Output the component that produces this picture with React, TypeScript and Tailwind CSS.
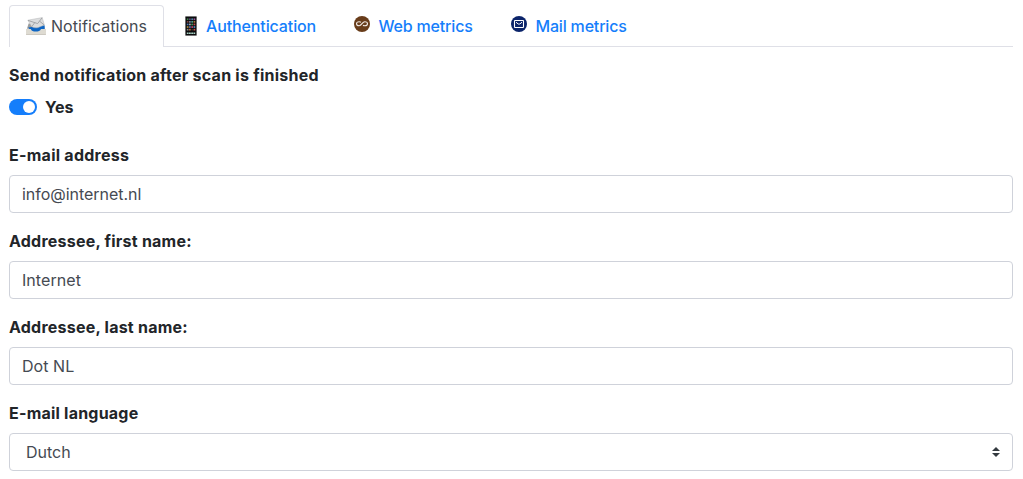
import type { ReactNode } from "react";

function InboxIcon() {
  return (
    <svg width="20" height="18" viewBox="0 0 20 18" className="block">
      <path d="M2.6 6.5 1 11.8h18l-1.6-5z" fill="#9c9d9d" />
      <path d="M2.2 10.6 18.6 8.2v4.2l-4 3H6z" fill="#0f66c4" />
      <path d="M1.8 3.2 16.2.6l2.2 7.4-6.4 2.6c-2 .4-4.4.2-6.2-.8z" fill="#dcddde" stroke="#b5b7b9" strokeWidth=".5" />
      <path d="m2 3.4 9.6 3.2L16.1.8M5.8 9.6l3-4M18 7.8l-4.4-3.6" fill="none" stroke="#97999c" strokeWidth=".8" />
      <path d="M0 12h4.8c.6 2 2.4 2.6 5 2.6s4.5-.5 5.2-2.6h5v6H0z" fill="#dedbd2" />
      <path d="M.2 17.6h19.6" stroke="#c5c2ba" strokeWidth=".8" />
    </svg>
  );
}

const appColors = [
  "#3f7d4c", "#5a4a78", "#4b86a6", "#9b5a9e",
  "#7e4040", "#73809c", "#4a9a8e", "#a07a3a",
  "#4a78b8", "#b0b0b0", "#3d8f5a", "#c05050",
  "#b08a3c", "#5f6fae", "#c04870", "#4e8fc0",
  "#8a8a8a", "#c86a3a", "#303030", "#d05050",
];

function PhoneIcon() {
  return (
    <svg width="12" height="20" viewBox="0 0 12 20" className="block">
      <rect x=".4" y=".4" width="11.2" height="19.2" rx=".8" fill="#0b0b0c" stroke="#6f6f70" strokeWidth=".8" />
      {appColors.map((c, i) => (
        <rect key={i} x={1.8 + (i % 4) * 2.25} y={2.4 + Math.floor(i / 4) * 2.6} width="1.7" height="1.7" fill={c} />
      ))}
      <path d="M1.8 17.2h8.4" stroke="#a9d2c4" strokeWidth="1.5" strokeDasharray="1.8 .4" />
    </svg>
  );
}

function WebIcon() {
  return (
    <svg width="16" height="16" viewBox="0 0 16 16" className="block">
      <circle cx="8" cy="8" r="8" fill="#683c1a" />
      <path
        d="M7 6.2C6.6 5.9 6 5.7 5.2 5.7 3.6 5.7 2.5 6.5 2.5 7.7s1.1 2 2.7 2C7.8 9.7 8.2 5.7 10.8 5.7c1.6 0 2.7.8 2.7 2s-1.1 2-2.7 2c-.8 0-1.4-.2-1.8-.5"
        fill="none"
        stroke="#f0e9e4"
        strokeWidth="1.1"
      />
    </svg>
  );
}

function MailIcon() {
  return (
    <svg width="16" height="16" viewBox="0 0 16 16" className="block">
      <circle cx="8" cy="8" r="8" fill="#0b246a" />
      <rect x="3.5" y="4.5" width="9" height="7" rx=".6" fill="none" stroke="#fff" strokeWidth="1.1" />
      <path d="M5 6.2 7.2 8h1.6L11 6.2" fill="none" stroke="#fff" strokeWidth="1" />
    </svg>
  );
}

function Field({ label, labelClass, children }: { label: string; labelClass: string; children: ReactNode }) {
  return (
    <div className="mb-4">
      <label className="mb-2 block font-bold">
        <span className={labelClass}>{label}</span>
      </label>
      {children}
    </div>
  );
}

const box = "flex h-[38px] w-full items-center rounded border border-[#cfd2da] bg-white font-normal text-[#454a52]";

export default function App() {
  return (
    <main className="h-[479px] overflow-hidden bg-white pt-[5px] pr-2.5 pl-[9px] font-['Inter',sans-serif] text-base leading-6 text-[#222529]">
      <nav className="flex h-[42px] border-b border-[#dfe0e7] font-medium text-[#157efb]">
        <a className="flex h-[42px] w-[155px] items-center rounded-t border border-b-0 border-[#dfe0e7] bg-white pb-0.5 pl-4 font-normal text-[#454a52]">
          <InboxIcon />
          <span className="ml-[5px] whitespace-nowrap tracking-[0.05px]">Notifications</span>
        </a>
        <a className="flex w-[170px] items-center pl-[21px]">
          <PhoneIcon />
          <span className="ml-[9px] whitespace-nowrap tracking-[-0.12px]">Authentication</span>
        </a>
        <a className="flex w-[157px] items-center pl-5">
          <span className="-mt-1"><WebIcon /></span>
          <span className="ml-[8.5px] whitespace-nowrap tracking-[-0.18px]">Web metrics</span>
        </a>
        <a className="flex items-center pl-5">
          <span className="-mt-1"><MailIcon /></span>
          <span className="ml-[8.5px] whitespace-nowrap tracking-[-0.18px]">Mail metrics</span>
        </a>
      </nav>
      <section className="pt-4">
        <div className="font-bold"><span className="tracking-[0.24px]">Send notification after scan is finished</span></div>
        <div className="mt-2 mb-6 flex items-center font-bold">
          <span className="flex h-4 w-7 items-center justify-end rounded-full bg-[#157efb] pr-0.5">
            <span className="size-3 rounded-full bg-white" />
          </span>
          <span className="ml-2">Yes</span>
        </div>
        <Field label="E-mail address" labelClass="tracking-[0.26px]">
          <div className={`${box} px-3`}><span className="tracking-[-0.03px]">info@internet.nl</span></div>
        </Field>
        <Field label="Addressee, first name:" labelClass="tracking-[0.23px]">
          <div className={`${box} px-3`}><span className="tracking-[0.06px]">Internet</span></div>
        </Field>
        <Field label="Addressee, last name:" labelClass="tracking-[0.23px]">
          <div className={`${box} px-3`}><span className="tracking-[0.05px]">Dot NL</span></div>
        </Field>
        <Field label="E-mail language" labelClass="tracking-[0.22px]">
          <div className={`${box} justify-between pr-3 pl-4`}>
            <span>Dutch</span>
            <svg width="8" height="10" viewBox="0 0 4 5"><path d="M2 0 0 2h4zm0 5L0 3h4z" fill="#343a40" /></svg>
          </div>
        </Field>
      </section>
    </main>
  );
}
